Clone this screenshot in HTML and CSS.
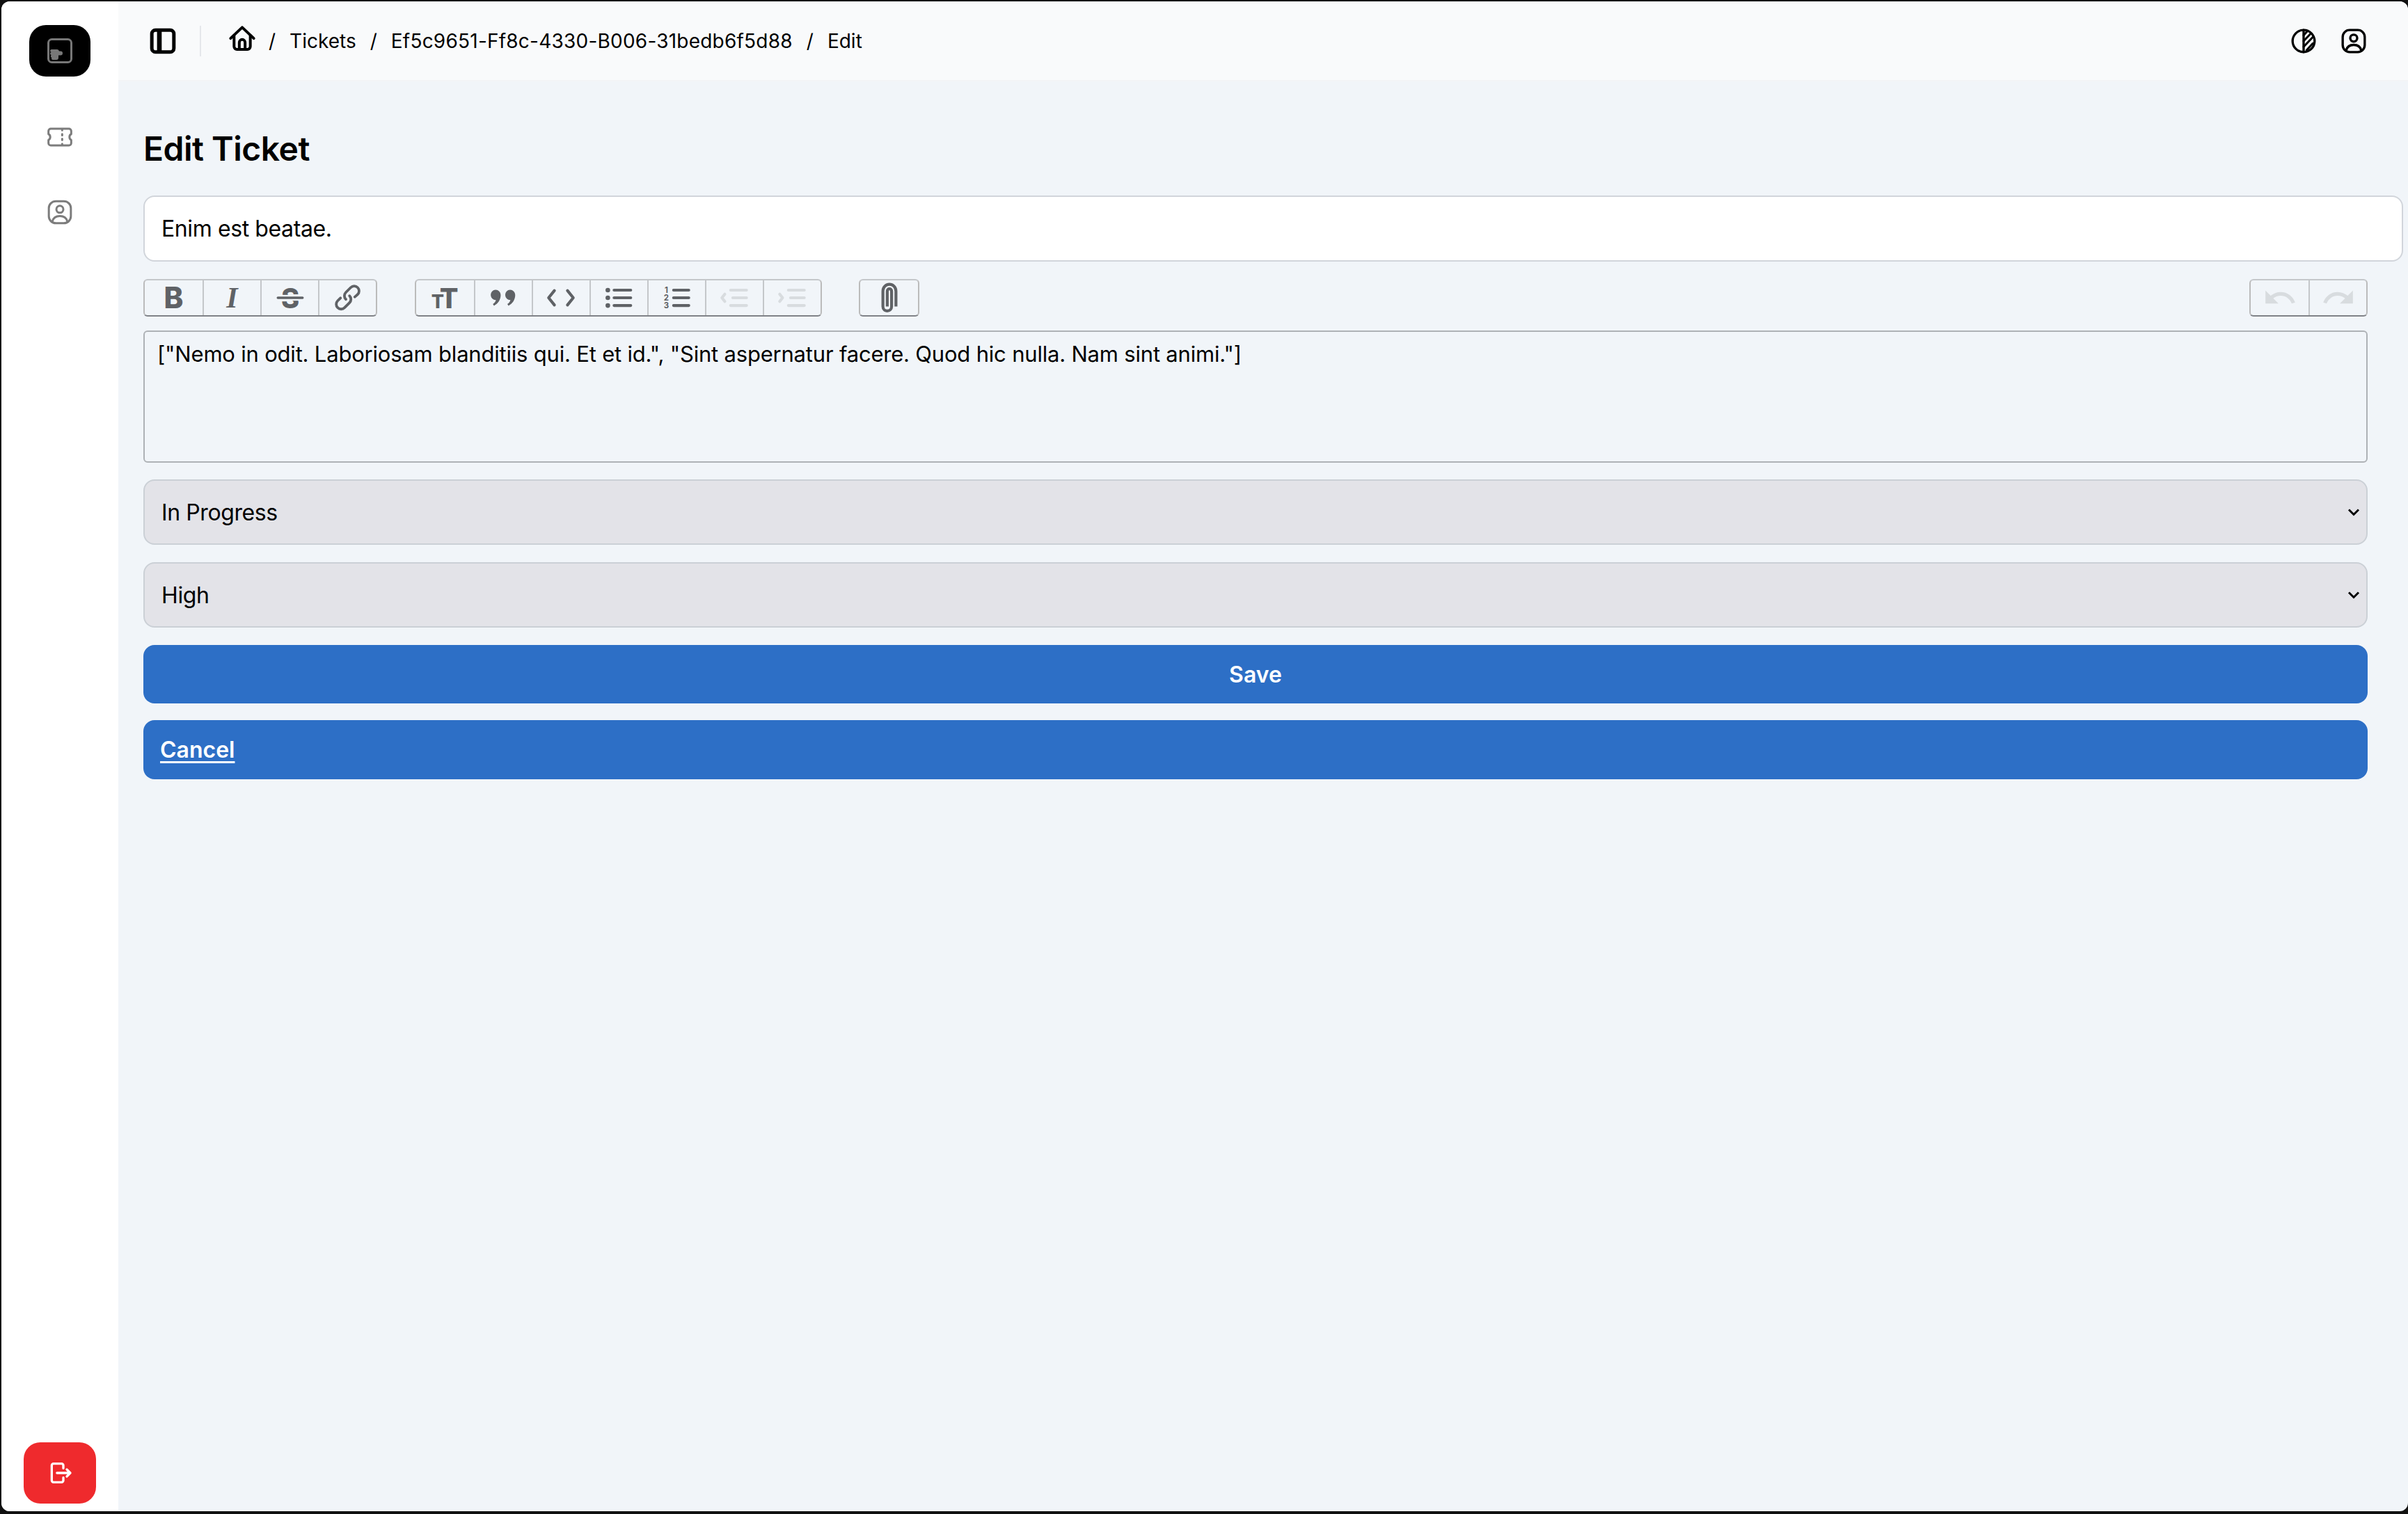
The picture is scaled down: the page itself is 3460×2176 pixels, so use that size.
FILE: index.html
```html
<!DOCTYPE html>
<html lang="en">
<head>
<meta charset="utf-8">
<title>Edit Ticket</title>
<link rel="stylesheet" href="styles.css">
</head>
<body>
<div class="frame">
<div class="app">
  <aside class="sidebar">
    <div class="logo">
      <svg class="logo-icon" viewBox="0 0 36 36"><rect x="1.5" y="1.5" width="33" height="33" rx="5" fill="none" stroke="#777" stroke-width="3"/><path d="M6 16h8a3 3 0 0 1 3 2.500h2a3 3 0 0 1 0 6h-3V28a3 3 0 0 1-3 3H8a2 2 0 0 1-1.600-3.200A2 2 0 0 1 6 24a2 2 0 0 1 0-4 2 2 0 0 1 0-4z" fill="#777"/></svg>
    </div>
    <nav class="side-nav">
      <svg class="icon40 gray" viewBox="0 0 24 24"><path d="M14 5.500v.6m0 3.400v1m0 3v1m0 3.400v.6M4.200 4.800c-1.100 0-2 .9-2 2v2.600a3 3 0 0 1 0 5.200v2.600c0 1.100.9 2 2 2h15.600c1.100 0 2-.9 2-2v-2.600a3 3 0 0 1 0-5.200V6.800c0-1.100-.9-2-2-2H4.200Z"/></svg>
      <svg class="icon40 gray" viewBox="0 0 24 24"><path d="M8.500 2.500h7a6 6 0 0 1 6 6v7a6 6 0 0 1-6 6h-7a6 6 0 0 1-6-6v-7a6 6 0 0 1 6-6z"/><circle cx="12" cy="9.500" r="3"/><path d="M5.500 20c.8-3.200 3.400-4.700 6.500-4.700s5.700 1.500 6.500 4.700"/></svg>
    </nav>
    <button class="logout" type="button" aria-label="Log out">
      <svg class="icon40 white" viewBox="0 0 24 24"><path d="M15 8V5.500a1.500 1.500 0 0 0-1.500-1.500H6.500A1.500 1.500 0 0 0 5 5.500v13A1.500 1.500 0 0 0 6.500 20h7a1.500 1.500 0 0 0 1.500-1.500V16"/><path d="M9.500 12H21m-3-3 3 3-3 3"/></svg>
    </button>
  </aside>
  <div class="content">
    <header class="topbar">
      <svg class="icon40 black bold toggle" viewBox="0 0 24 24"><rect x="2.500" y="2.500" width="19" height="19" rx="3.200" stroke-width="3"/><path d="M9 3v18" stroke-width="4" stroke-linecap="butt"/></svg>
      <span class="divider"></span>
      <svg class="icon40 black bold home" viewBox="0 0 24 24"><path d="M2 11.500 12 2l10 9.500"/><path d="M5 9v9.500A2.500 2.500 0 0 0 7.500 21h9a2.500 2.500 0 0 0 2.500-2.500V9"/><path d="M9.500 21v-6a2.500 2.500 0 0 1 5 0v6"/></svg>
      <ol class="crumbs">
        <li class="sep">/</li><li>Tickets</li>
        <li class="sep">/</li><li class="crumb-id">Ef5c9651-Ff8c-4330-B006-31bedb6f5d88</li>
        <li class="sep">/</li><li>Edit</li>
      </ol>
      <div class="top-actions">
        <svg class="icon40 black" viewBox="0 0 24 24"><circle cx="12" cy="12" r="9.500"/><path d="M12 2.500v19"/><path d="M12 7l3-3.200M12 12l6-6.300M12 17l8-8.500M14.500 20l5.500-6" stroke-width="1.800"/></svg>
        <svg class="icon40 black" viewBox="0 0 24 24"><path d="M8.500 2.500h7a6 6 0 0 1 6 6v7a6 6 0 0 1-6 6h-7a6 6 0 0 1-6-6v-7a6 6 0 0 1 6-6z"/><circle cx="12" cy="9.500" r="3"/><path d="M5.500 20c.8-3.200 3.400-4.700 6.500-4.700s5.700 1.500 6.500 4.700"/></svg>
      </div>
    </header>
    <main class="page">
      <h1 class="title">Edit Ticket</h1>
      <form class="form">
        <input class="text-input" type="text" value="Enim est beatae.">
        <div class="toolbar">
          <div class="tool-group">
            <button class="tool" type="button"><span class="glyph-b">B</span></button>
            <button class="tool" type="button"><span class="glyph-i">I</span></button>
            <button class="tool" type="button"><svg class="tool-icon" viewBox="0 0 24 24"><text x="12" y="19.300" class="svg-s" text-anchor="middle">S</text><rect x="3" y="10" width="18" height="4" fill="#f1f5f9"/><path d="M3.500 12h17" stroke="#5f6266" stroke-width="1.700" stroke-linecap="round"/></svg></button>
            <button class="tool" type="button"><svg class="tool-icon" viewBox="0 0 24 24"><path class="fill" d="M9.880 13.700a4.300 4.300 0 0 1 0-6.070l3.370-3.370a4.260 4.260 0 0 1 6.070 0 4.300 4.300 0 0 1 0 6.060l-1.960 1.720a.91.91 0 1 1-1.300-1.300l1.970-1.710a2.460 2.460 0 0 0-3.480-3.480l-3.380 3.370a2.460 2.460 0 0 0 0 3.480.91.91 0 1 1-1.300 1.300z"/><path class="fill" d="M4.250 19.460a4.300 4.300 0 0 1 0-6.070l1.930-1.900a.91.91 0 1 1 1.300 1.300l-1.930 1.900a2.460 2.460 0 0 0 3.480 3.480l3.370-3.380c.96-.96.96-2.520 0-3.480a.91.91 0 1 1 1.300-1.300 4.300 4.300 0 0 1 0 6.070l-3.380 3.380a4.260 4.260 0 0 1-6.070 0z"/></svg></button>
          </div>
          <div class="tool-group">
            <button class="tool" type="button"><svg class="tool-icon" viewBox="0 0 24 24"><text x="7.200" y="19.300" class="svg-t small" text-anchor="middle">T</text><text x="15" y="19.300" class="svg-t" text-anchor="middle">T</text></svg></button>
            <button class="tool" type="button"><svg class="tool-icon" viewBox="0 0 24 24"><path class="fill" d="M6.800 6.500a3.500 3.500 0 0 1 3.500 3.500c0 3.500-1.900 6-4.600 7.500l-.8-1.200c1.200-.9 1.900-1.800 2.100-2.800a3.400 3.400 0 1 1-.2-7zM16.800 6.500a3.500 3.500 0 0 1 3.500 3.500c0 3.500-1.900 6-4.600 7.500l-.8-1.200c1.200-.9 1.900-1.800 2.100-2.800a3.400 3.400 0 1 1-.2-7z"/></svg></button>
            <button class="tool" type="button"><svg class="tool-icon" viewBox="0 0 24 24"><path class="line" d="M7.500 7 3.500 12l4 5M16.500 7l4 5-4 5"/></svg></button>
            <button class="tool" type="button"><svg class="tool-icon" viewBox="0 0 24 24"><circle class="fill" cx="4.500" cy="6.700" r="1.600"/><circle class="fill" cx="4.500" cy="12" r="1.600"/><circle class="fill" cx="4.500" cy="17.300" r="1.600"/><path class="line" d="M8.800 6.700h11.500M8.800 12h11.500M8.800 17.300h11.500"/></svg></button>
            <button class="tool" type="button"><svg class="tool-icon" viewBox="0 0 24 24"><text x="5" y="8.700" class="svg-n" text-anchor="middle">1</text><text x="5" y="14" class="svg-n" text-anchor="middle">2</text><text x="5" y="19.300" class="svg-n" text-anchor="middle">3</text><path class="line" d="M10 6.700h10.500M10 12h10.500M10 17.300h10.500"/></svg></button>
            <button class="tool off" type="button"><svg class="tool-icon" viewBox="0 0 24 24"><path class="line" d="M9.500 6.700h11M11 12h9.500M9.500 17.300h11M5.500 9.500 3.500 12l2 2.500"/></svg></button>
            <button class="tool off" type="button"><svg class="tool-icon" viewBox="0 0 24 24"><path class="line" d="M9.500 6.700h11M11 12h9.500M9.500 17.300h11M3.500 9.500l2 2.500-2 2.500"/></svg></button>
          </div>
          <div class="tool-group">
            <button class="tool" type="button"><svg class="tool-icon" viewBox="0 0 24 24"><path class="clip" d="M10.500 18V7.500c0-2.250 3-2.250 3 0V18c0 4.125-6 4.125-6 0V7.500c0-6.375 9-6.375 9 0V18"/></svg></button>
          </div>
          <div class="tool-group history">
            <button class="tool off" type="button"><svg class="tool-icon" viewBox="0 0 24 24"><path class="fill" d="M12.500 8c-2.650 0-5.050.99-6.900 2.600L2 7v9h9l-3.620-3.620c1.390-1.160 3.160-1.880 5.120-1.880 3.540 0 6.550 2.310 7.600 5.500l2.370-.78C21.080 11.030 17.150 8 12.500 8z"/></svg></button>
            <button class="tool off" type="button"><svg class="tool-icon" viewBox="0 0 24 24"><path class="fill" d="M18.400 10.600C16.550 9 14.150 8 11.500 8c-4.650 0-8.580 3.030-9.960 7.220L3.900 16c1.050-3.190 4.050-5.500 7.600-5.500 1.950 0 3.730.72 5.120 1.880L13 16h9V7l-3.600 3.600z"/></svg></button>
          </div>
        </div>
        <div class="editor">["Nemo in odit. Laboriosam blanditiis qui. Et et id.", "Sint aspernatur facere. Quod hic nulla. Nam sint animi."]</div>
        <div class="select-wrap">
          <select class="select"><option>In Progress</option></select>
          <svg class="chevron" viewBox="0 0 18 12"><path d="M2 2.500 9 9.500l7-7"/></svg>
        </div>
        <div class="select-wrap">
          <select class="select"><option>High</option></select>
          <svg class="chevron" viewBox="0 0 18 12"><path d="M2 2.500 9 9.500l7-7"/></svg>
        </div>
        <button class="btn" type="button">Save</button>
        <a class="btn btn-link" href="#">Cancel</a>
      </form>
    </main>
  </div>
</div>
</div>
</body>
</html>
```
FILE: styles.css
```css
* { box-sizing: border-box; }
html, body { margin: 0; height: 100%; }
body { font-family: Inter, "Liberation Sans", sans-serif; color: #000; background: #111; overflow: hidden; }

.frame { height: 2176px; padding: 2px 0 4px 2px; background: #111; }
.app { display: flex; height: 100%; border-radius: 12px; overflow: hidden; background: #f1f5f9; }

.icon40 { width: 40px; height: 40px; flex: none; fill: none; stroke-width: 2; stroke-linecap: round; stroke-linejoin: round; }
.gray { stroke: #7c7c7c; stroke-width: 1.800; }
.white { stroke: #fff; }
.black { stroke: #000; }
.bold { stroke-width: 2.400; }

.sidebar { width: 168px; flex: none; display: flex; flex-direction: column; align-items: center; padding: 34px 0 11px; background: #fff; }
.logo { width: 88px; height: 74px; border-radius: 24px; background: #000; display: flex; align-items: center; justify-content: center; }
.logo-icon { width: 36px; height: 36px; }
.side-nav { display: flex; flex-direction: column; align-items: center; gap: 68px; margin-top: 67px; }
.logout { width: 104px; height: 88px; margin-top: auto; border: 0; padding: 0; border-radius: 24px; background: #ef2a2d; display: flex; align-items: center; justify-content: center; }

.content { flex: 1; min-width: 0; display: flex; flex-direction: column; }
.topbar { height: 115px; flex: none; display: flex; align-items: center; padding: 0 58px 0 44px; background: #f9fafb; border-bottom: 2px solid #f3f4f6; }
.divider { width: 2px; height: 44px; margin: 0 39px 0 33px; background: #e5e7eb; }
.home { margin-top: -6px; }
.crumbs { display: flex; align-items: center; gap: 20px; margin: 0 0 0 18px; padding: 0; list-style: none; font-size: 28px; line-height: 40px; }
.crumb-id { letter-spacing: .22px; }
.top-actions { margin-left: auto; display: flex; gap: 32px; }

.page { flex: 1; padding: 0 58px 0 36px; }
.title { margin: 65px 0 0; font-size: 48px; line-height: 64px; font-weight: 600; letter-spacing: -.5px; }
.form { display: flex; flex-direction: column; margin-top: 35px; }

.text-input { width: calc(100% + 51px); height: 95px; padding: 0 24px; border: 2px solid #d1d5db; border-radius: 16px; background: #fff; font: 400 32px Inter, sans-serif; letter-spacing: -.4px; color: #000; }

.toolbar { display: flex; gap: 53.500px; margin-top: 25px; }
.tool-group { display: flex; height: 54px; border: 2px solid #bbb; border-top-color: #c4c7ca; border-bottom-color: #7f8287; border-radius: 6px; }
.history { margin-left: auto; }
.tool { width: 83px; padding: 0; border: 0; border-left: 2px solid #c4c7ca; background: none; display: flex; align-items: center; justify-content: center; }
.tool:first-child { border-left: 0; }
.tool-icon { width: 50px; height: 50px; }
.fill { fill: #5f6266; }
.line { fill: none; stroke: #5f6266; stroke-width: 2; stroke-linecap: round; stroke-linejoin: round; }
.clip { fill: none; stroke: #5f6266; stroke-width: 2; }
.off .fill { fill: #d8dcdf; }
.off .line { stroke: #d8dcdf; }
.glyph-b { font: 800 42px/50px Inter, sans-serif; color: #5f6266; }
.glyph-i { font: italic 700 42px/50px "Liberation Serif", serif; color: #5f6266; }
.svg-s { font: 800 19px Inter, sans-serif; fill: #5f6266; }
.svg-t { font: 800 19px Inter, sans-serif; fill: #5f6266; }
.svg-t.small { font-size: 13px; }
.svg-n { font: 700 5.500px Inter, sans-serif; fill: #5f6266; }

.editor { height: 190px; margin-top: 20px; padding: 13px 18px; border: 2px solid #aeb2b6; border-radius: 6px; font-size: 31px; letter-spacing: -.2px; line-height: 38px; }

.select-wrap { position: relative; margin-top: 25px; }
.editor + .select-wrap { margin-top: 24px; }
.select { display: block; width: 100%; height: 94px; padding: 0 24px; border: 2px solid #cbd0d6; border-radius: 16px; background: #e3e3e8; font: 400 32px Inter, sans-serif; letter-spacing: -.4px; color: #000; appearance: none; }
.chevron { position: absolute; right: 11px; top: 41px; width: 18px; height: 12px; fill: none; stroke: #000; stroke-width: 3; pointer-events: none; }

.btn { display: block; width: 100%; height: 84px; margin-top: 25px; padding: 0 24px; border: 0; border-radius: 16px; background: #2d6fc6; color: #fff; font: 600 32px/86px Inter, sans-serif; text-align: center; }
.btn-link { margin-top: 24px; height: 85px; text-align: left; text-decoration: underline; text-underline-offset: 5px; }
```
